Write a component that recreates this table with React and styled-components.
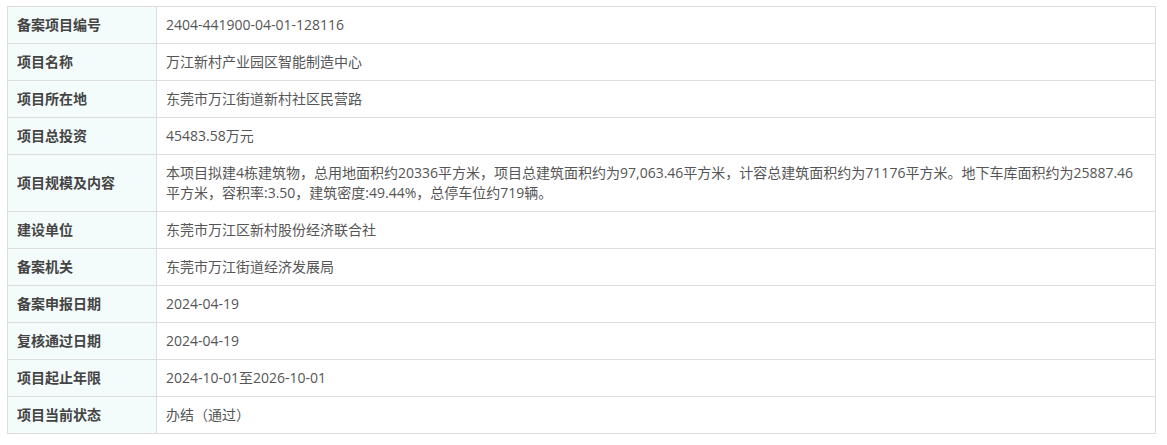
import React from 'react'
import styled, { createGlobalStyle } from 'styled-components'

const GlobalStyle = createGlobalStyle`
  body {
    margin: 0;
    background: #fff;
    font-family: "Open Sans", "Noto Sans CJK SC", sans-serif;
  }
`

const Page = styled.div`
  padding: 6px 0 0 7px;
`

const InfoTable = styled.table`
  width: 1149px;
  border-collapse: collapse;
  table-layout: fixed;
  font-size: 14px;
  line-height: 20px;
`

const LabelCell = styled.th`
  width: 130px;
  padding: 8px 9px 8px 9px;
  border: 1px solid #dddddd;
  background: #f3fbfb;
  color: #444;
  font-weight: 700;
  text-align: left;
  vertical-align: middle;
`

const ValueCell = styled.td`
  padding: 8px 9px;
  border: 1px solid #dddddd;
  color: #555;
  vertical-align: middle;
`

const rows = [
  ['备案项目编号', '2404-441900-04-01-128116'],
  ['项目名称', '万江新村产业园区智能制造中心'],
  ['项目所在地', '东莞市万江街道新村社区民营路'],
  ['项目总投资', '45483.58万元'],
  [
    '项目规模及内容',
    '本项目拟建4栋建筑物，总用地面积约20336平方米，项目总建筑面积约为97,063.46平方米，计容总建筑面积约为71176平方米。地下车库面积约为25887.46平方米，容积率:3.50，建筑密度:49.44%，总停车位约719辆。',
  ],
  ['建设单位', '东莞市万江区新村股份经济联合社'],
  ['备案机关', '东莞市万江街道经济发展局'],
  ['备案申报日期', '2024-04-19'],
  ['复核通过日期', '2024-04-19'],
  ['项目起止年限', '2024-10-01至2026-10-01'],
  ['项目当前状态', '办结（通过）'],
]

const App = () => {
  return (
    <Page>
      <GlobalStyle />
      <InfoTable>
        <tbody>
          {rows.map(([label, value]) => (
            <tr key={label}>
              <LabelCell>{label}</LabelCell>
              <ValueCell>{value}</ValueCell>
            </tr>
          ))}
        </tbody>
      </InfoTable>
    </Page>
  )
}

export default App
